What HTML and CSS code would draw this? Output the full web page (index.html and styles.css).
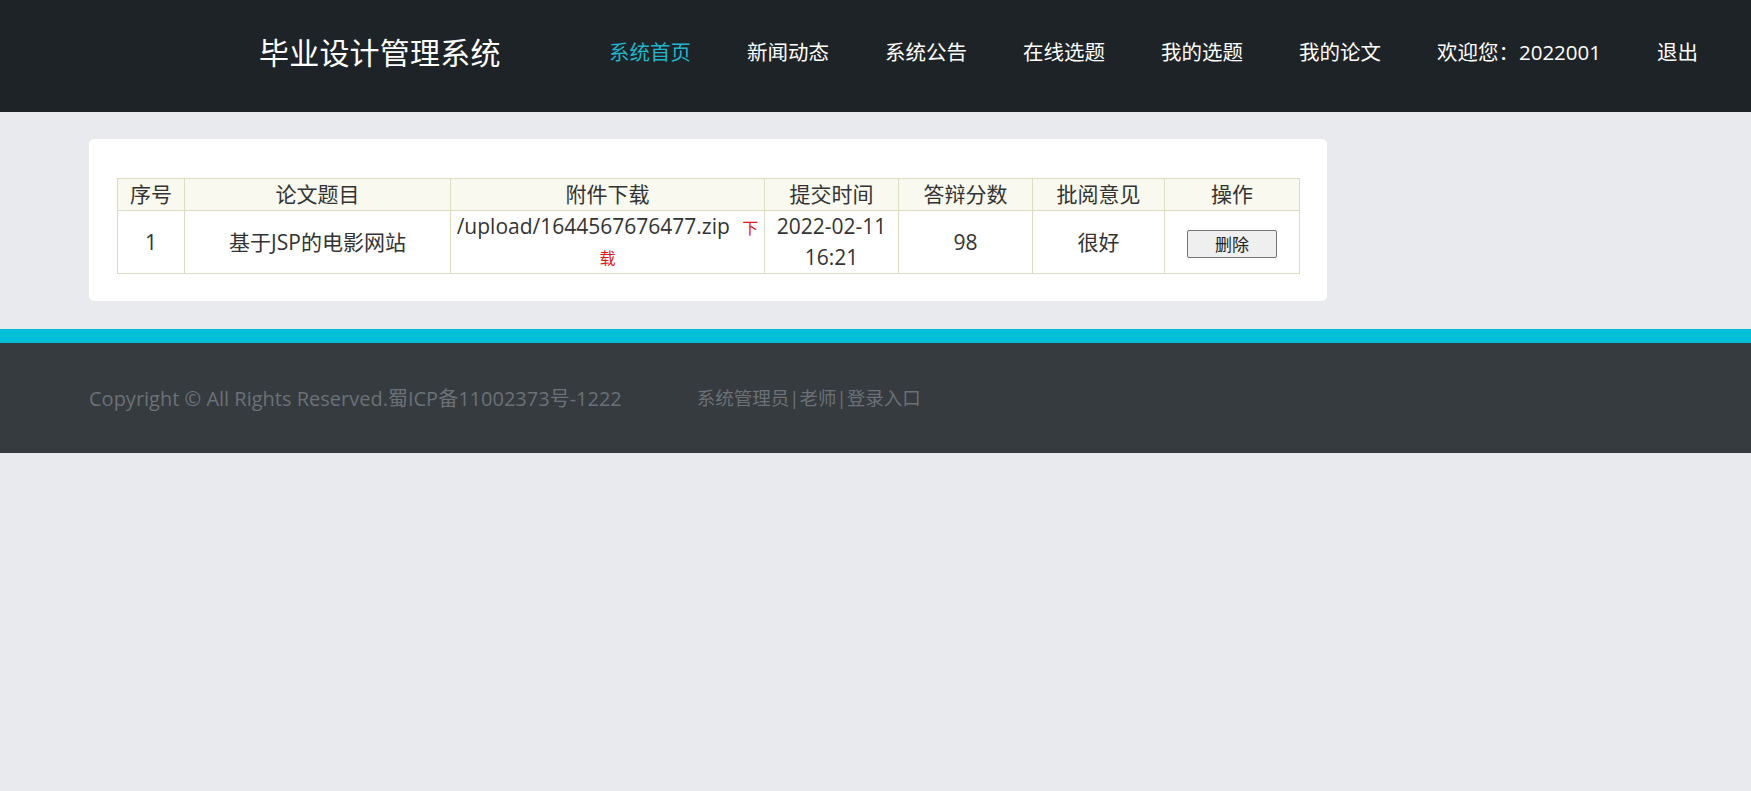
FILE: index.html
```html
<!DOCTYPE html>
<html lang="zh-CN">
<head>
<meta charset="utf-8">
<title>毕业设计管理系统 - 我的论文</title>
<link rel="stylesheet" href="styles.css">
</head>
<body>
<header class="topbar">
  <div class="brand">毕业设计管理系统</div>
  <nav class="nav">
    <a class="nav-link active" href="#">系统首页</a>
    <a class="nav-link" href="#">新闻动态</a>
    <a class="nav-link" href="#">系统公告</a>
    <a class="nav-link" href="#">在线选题</a>
    <a class="nav-link" href="#">我的选题</a>
    <a class="nav-link" href="#">我的论文</a>
    <a class="nav-link" href="#">欢迎您：2022001</a>
    <a class="nav-link" href="#">退出</a>
  </nav>
</header>

<main class="main">
  <section class="card">
    <table class="grid">
      <colgroup>
        <col class="c-no">
        <col class="c-title">
        <col class="c-file">
        <col class="c-time">
        <col class="c-score">
        <col class="c-note">
        <col class="c-op">
      </colgroup>
      <thead>
        <tr>
          <th>序号</th>
          <th>论文题目</th>
          <th>附件下载</th>
          <th>提交时间</th>
          <th>答辩分数</th>
          <th>批阅意见</th>
          <th>操作</th>
        </tr>
      </thead>
      <tbody>
        <tr>
          <td>1</td>
          <td>基于JSP的电影网站</td>
          <td class="file">/upload/1644567676477.zip <a class="dl" href="#">下载</a></td>
          <td>2022-02-11 16:21</td>
          <td>98</td>
          <td>很好</td>
          <td><button class="btn" type="button">删除</button></td>
        </tr>
      </tbody>
    </table>
  </section>
</main>

<footer class="footer">
  <div class="footer-inner">
    <span class="copy">Copyright © All Rights Reserved.蜀ICP备11002373号-1222</span>
    <a class="login" href="#">系统管理员|老师|登录入口</a>
  </div>
</footer>
</body>
</html>
```

FILE: styles.css
```css
* {
  box-sizing: border-box;
}

body {
  margin: 0;
  background: #e9eaed;
  font-family: "Open Sans", "Noto Sans CJK SC", sans-serif;
  color: #333;
}

a {
  text-decoration: none;
}

/* top navigation bar */
.topbar {
  height: 112px;
  background: #1e2327;
  display: flex;
  align-items: center;
  padding: 0 25px 11px 259px;
}

.brand {
  color: #fff;
  font-size: 30px;
  letter-spacing: 0.2px;
}

.nav {
  margin-left: auto;
  display: flex;
  align-items: center;
}

.nav-link {
  color: #fff;
  font-size: 20.5px;
  padding: 0 28px;
}

.nav-link.active {
  color: #22b4cb;
}

/* content area */
.main {
  padding: 27px 89px 28px;
}

.card {
  width: 1238px;
  background: #fff;
  border-radius: 5px;
  padding: 39px 28px 27px;
}

.grid {
  width: 100%;
  border-collapse: collapse;
  table-layout: fixed;
  font-size: 21px;
  line-height: 31px;
  color: #333;
}

.c-no { width: 67px; }
.c-title { width: 266px; }
.c-file { width: 314px; }
.c-time { width: 134px; }
.c-score { width: 134px; }
.c-note { width: 132px; }
.c-op { width: 135px; }

.grid th,
.grid td {
  border: 1px solid #dcdcc0;
  text-align: center;
  padding: 0 3px;
  font-weight: normal;
}

.grid th {
  height: 30px;
  background: #f9f9ef;
}

.grid td {
  height: 63px;
}

.grid td.file {
  vertical-align: top;
  line-height: 30px;
}

.dl {
  color: #e01a1a;
  font-size: 16px;
  line-height: 16px;
  margin-left: 7px;
}

.btn {
  width: 90px;
  height: 28px;
  font-family: "Noto Sans CJK SC", sans-serif;
  font-size: 17px;
  line-height: 1;
  color: #222;
  background: #efefef;
  border: 1px solid #767676;
  border-radius: 2px;
  padding: 0;
  vertical-align: middle;
}

/* footer */
.footer {
  border-top: 14px solid #00c0d9;
  background: #363b40;
  height: 124px;
}

.footer-inner {
  height: 110px;
  display: flex;
  align-items: center;
  padding: 0 89px 2px;
  font-size: 20px;
  color: #6b7176;
}

.login {
  color: #6b7176;
  font-size: 18.5px;
  margin-left: 75px;
}
```
